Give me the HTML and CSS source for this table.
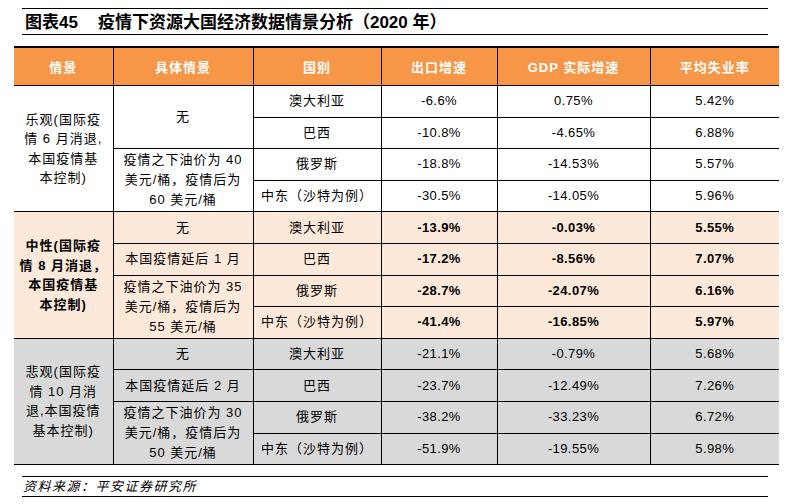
FILE: index.html
```html
<!DOCTYPE html>
<html lang="zh">
<head>
<meta charset="utf-8">
<title>图表45</title>
<link rel="stylesheet" href="styles.css">
</head>
<body>
<div class="page">
  <div class="title"><span class="fig">图表45</span><span class="ttext">疫情下资源大国经济数据情景分析（2020 年）</span></div>
  <table class="grid">
    <colgroup>
      <col class="c1"><col class="c2"><col class="c3"><col class="c4"><col class="c5"><col class="c6">
    </colgroup>
    <thead>
      <tr class="head">
        <th>情景</th><th>具体情景</th><th>国别</th><th>出口增速</th><th>GDP 实际增速</th><th>平均失业率</th>
      </tr>
    </thead>
    <tbody class="g1">
      <tr>
        <td rowspan="4" class="scene">乐观(国际疫<br>情 6 月消退,<br>本国疫情基<br>本控制)</td>
        <td rowspan="2" class="cn">无</td>
        <td class="cn">澳大利亚</td><td class="num">-6.6%</td><td class="num">0.75%</td><td class="num last">5.42%</td>
      </tr>
      <tr><td class="cn">巴西</td><td class="num">-10.8%</td><td class="num">-4.65%</td><td class="num last">6.88%</td></tr>
      <tr>
        <td rowspan="2" class="cn oil">疫情之下油价为 40<br>美元/桶，疫情后为<br>60 美元/桶</td>
        <td class="cn">俄罗斯</td><td class="num">-18.8%</td><td class="num">-14.53%</td><td class="num last">5.57%</td>
      </tr>
      <tr><td class="cn">中东（沙特为例）</td><td class="num">-30.5%</td><td class="num">-14.05%</td><td class="num last">5.96%</td></tr>
    </tbody>
    <tbody class="g2">
      <tr>
        <td rowspan="4" class="scene bold">中性(国际疫<br>情 8 月消退，<br>本国疫情基<br>本控制)</td>
        <td class="cn">无</td>
        <td class="cn">澳大利亚</td><td class="num bold">-13.9%</td><td class="num bold">-0.03%</td><td class="num bold last">5.55%</td>
      </tr>
      <tr><td class="cn">本国疫情延后 1 月</td><td class="cn">巴西</td><td class="num bold">-17.2%</td><td class="num bold">-8.56%</td><td class="num bold last">7.07%</td></tr>
      <tr>
        <td rowspan="2" class="cn oil">疫情之下油价为 35<br>美元/桶，疫情后为<br>55 美元/桶</td>
        <td class="cn">俄罗斯</td><td class="num bold">-28.7%</td><td class="num bold">-24.07%</td><td class="num bold last">6.16%</td>
      </tr>
      <tr><td class="cn">中东（沙特为例）</td><td class="num bold">-41.4%</td><td class="num bold">-16.85%</td><td class="num bold last">5.97%</td></tr>
    </tbody>
    <tbody class="g3">
      <tr>
        <td rowspan="4" class="scene">悲观(国际疫<br>情 10 月消<br>退,本国疫情<br>基本控制)</td>
        <td class="cn">无</td>
        <td class="cn">澳大利亚</td><td class="num">-21.1%</td><td class="num">-0.79%</td><td class="num last">5.68%</td>
      </tr>
      <tr><td class="cn">本国疫情延后 2 月</td><td class="cn">巴西</td><td class="num">-23.7%</td><td class="num">-12.49%</td><td class="num last">7.26%</td></tr>
      <tr>
        <td rowspan="2" class="cn oil">疫情之下油价为 30<br>美元/桶，疫情后为<br>50 美元/桶</td>
        <td class="cn">俄罗斯</td><td class="num">-38.2%</td><td class="num">-33.23%</td><td class="num last">6.72%</td>
      </tr>
      <tr><td class="cn">中东（沙特为例）</td><td class="num">-51.9%</td><td class="num">-19.55%</td><td class="num last">5.98%</td></tr>
    </tbody>
  </table>
  <div class="source">资料来源：平安证券研究所</div>
</div>
</body>
</html>
```

FILE: styles.css
```css
html, body {
  margin: 0;
  padding: 0;
  background: #ffffff;
}

body {
  font-family: "Liberation Sans", "Noto Sans CJK SC", sans-serif;
  color: #000;
}

.page {
  width: 789px;
  height: 504px;
  padding-top: 8px;
  box-sizing: border-box;
}

.title {
  margin-left: 22px;
  width: 746px;
  height: 27px;
  box-sizing: border-box;
  border-top: 1px solid #000;
  border-bottom: 1px solid #000;
  display: flex;
  align-items: center;
  padding: 3px 0 0 3px;
  font-weight: 700;
  font-size: 17px;
  line-height: 20px;
}

.fig {
  margin-right: 20px;
}

.grid {
  margin: 11px 0 0 14px;
  width: 765px;
  table-layout: fixed;
  border-collapse: collapse;
  font-size: 13px;
}

.c1 { width: 99px; }
.c2 { width: 140px; }
.c3 { width: 128px; }
.c4 { width: 116px; }
.c5 { width: 153px; }
.c6 { width: 129px; }

.head th {
  background: #f79646;
  color: #fff;
  font-weight: 700;
  height: 37px;
  padding: 0;
  letter-spacing: 1px;
  border-top: 2px solid #000;
  border-bottom: 1px solid #000;
  border-right: 1px solid #000;
}

.head th:last-child {
  border-right: none;
}

.grid td {
  padding: 0;
  height: 30.6px;
  text-align: center;
  vertical-align: middle;
  border-right: 1px solid #000;
  border-bottom: 1px solid #000;
  line-height: 20px;
}

.grid td.last {
  border-right: none;
}

.g1 td { background: #ffffff; }
.g2 td { background: #fde9d9; }
.g3 td { background: #d9d9d9; }

.cn {
  letter-spacing: 1px;
}

.num {
  letter-spacing: 0.4px;
}

.bold {
  font-weight: 700;
}

.scene {
  line-height: 19.5px !important;
  letter-spacing: 1px;
}

.source {
  margin: 11px 0 0 22px;
  width: 746px;
  height: 21px;
  box-sizing: border-box;
  border-top: 1px solid #000;
  border-bottom: 1px solid #000;
  font-size: 13px;
  font-style: italic;
  letter-spacing: 1.5px;
  line-height: 19px;
  padding-left: 1px;
}
```
